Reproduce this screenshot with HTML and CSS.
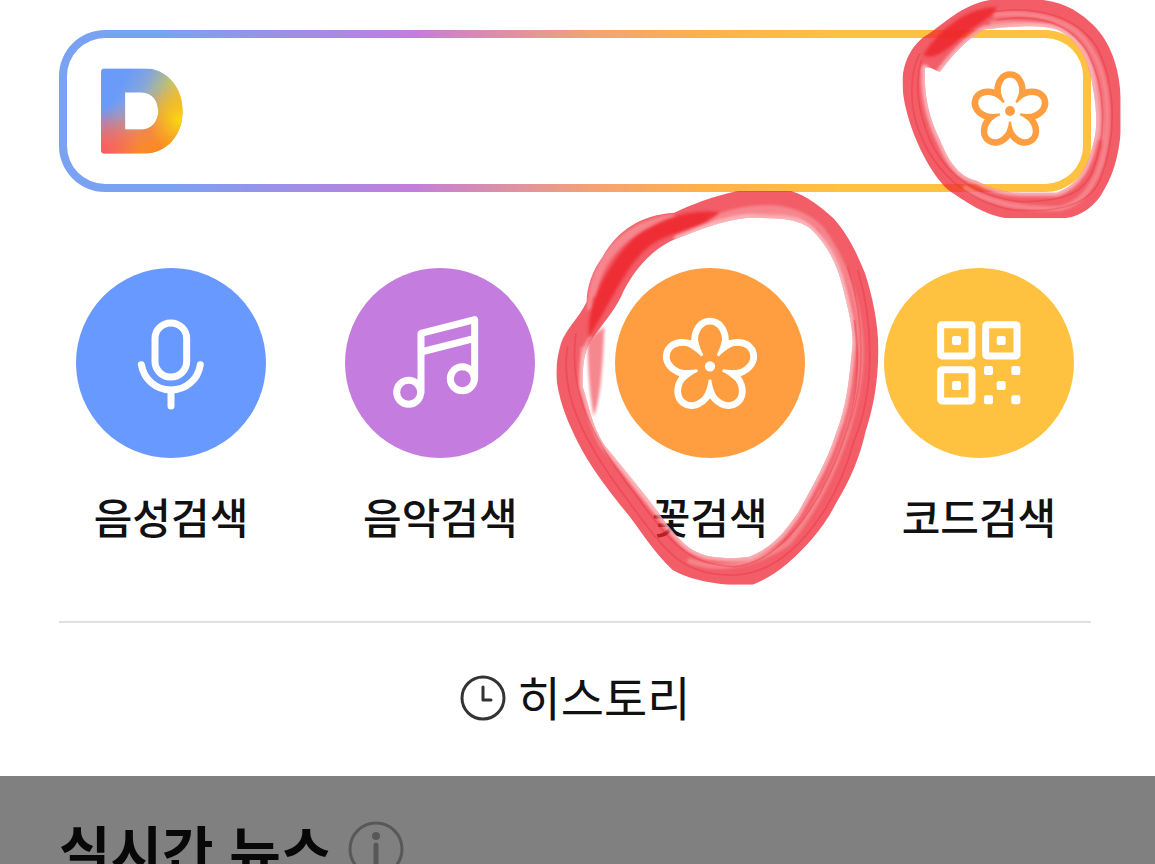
FILE: index.html
```html
<!DOCTYPE html>
<html lang="ko">
<head>
<meta charset="utf-8">
<meta name="viewport" content="width=device-width, initial-scale=1">
<title>검색</title>
<link rel="stylesheet" href="styles.css">
</head>
<body>
<svg class="defs" aria-hidden="true">
  <defs>
    <g id="petal">
      <path d="M-48,-78 C-48,-114 -28,-140 0,-140 C28,-140 48,-114 48,-78"/>
      <path class="wedge" transform="rotate(36)" d="M-2,-43 C-3,-60 -8,-72 -17,-92 L17,-92 C8,-72 3,-60 2,-43Z"/>
    </g>
    <g id="flower">
      <use href="#petal"/>
      <use href="#petal" transform="rotate(72)"/>
      <use href="#petal" transform="rotate(144)"/>
      <use href="#petal" transform="rotate(216)"/>
      <use href="#petal" transform="rotate(288)"/>
    </g>
    <linearGradient id="d-base" x1="0.1" y1="0.15" x2="0.95" y2="0.62">
      <stop offset="0.15" stop-color="#6b9bf8"/>
      <stop offset="0.4" stop-color="#84a5dc"/>
      <stop offset="0.9" stop-color="#f5d815"/>
    </linearGradient>
    <linearGradient id="d-warm" x1="0.35" y1="1" x2="0.15" y2="0.4">
      <stop offset="0" stop-color="#fa8a28"/>
      <stop offset="0.3" stop-color="#f58048" stop-opacity="0.9"/>
      <stop offset="1" stop-color="#d88090" stop-opacity="0"/>
    </linearGradient>
    <radialGradient id="d-red" cx="0" cy="1" r="0.5">
      <stop offset="0" stop-color="#fa5a66"/>
      <stop offset="1" stop-color="#fa5a66" stop-opacity="0"/>
    </radialGradient>
    <radialGradient id="d-yellow" cx="0.96" cy="0.6" r="0.4">
      <stop offset="0" stop-color="#f7dc10"/>
      <stop offset="1" stop-color="#f7c810" stop-opacity="0"/>
    </radialGradient>
    <clipPath id="d-shape">
      <path clip-rule="evenodd" d="M12,0 H130 C200,0 247,58 247,129 C247,200 200,258 130,258 H12 Q0,258 0,246 V12 Q0,0 12,0Z M73,73 V185 H122 C154,185 173,159 173,129 C173,99 154,73 122,73Z"/>
    </clipPath>
    <filter id="soft" x="-20%" y="-20%" width="140%" height="140%"><feGaussianBlur stdDeviation="5"/></filter>
  </defs>
</svg>

<div class="page">
  <main class="panel">
    <form class="search">
      <svg class="logo" viewBox="0 0 248 258" role="img" aria-label="Daum">
        <g clip-path="url(#d-shape)">
          <rect width="248" height="258" fill="url(#d-base)"/>
          <rect width="248" height="258" fill="url(#d-warm)"/>
          <rect width="248" height="258" fill="url(#d-red)"/>
          <rect width="248" height="258" fill="url(#d-yellow)"/>
        </g>
      </svg>
      <input class="query" type="text" aria-label="검색어">
      <button class="flower-button" type="button" aria-label="꽃검색">
        <svg class="flower-icon" viewBox="-150 -150 300 300">
          <use href="#flower"/><circle class="dot" r="19"/>
        </svg>
      </button>
      <svg class="mark mark-small" viewBox="0 0 780 690" aria-hidden="true">
        <clipPath id="ring-a">
          <path clip-rule="evenodd" d="M68,250 C66,190 95,140 130,112 C190,75 240,15 330,0 H490 C560,8 605,42 640,75 C690,125 718,200 722,290 V400 C715,470 700,530 660,590 C630,630 590,655 540,655 H380 C310,645 250,600 205,570 C150,520 110,430 90,370 C75,320 68,290 68,250Z M135,205 C130,300 155,370 180,420 C200,470 230,530 290,542 C330,565 380,578 420,578 H530 C600,555 625,490 640,430 C655,380 648,320 640,270 C630,190 600,125 540,93 C500,72 400,78 315,88 C270,110 230,150 180,215 C160,210 145,195 135,205Z"/>
        </clipPath>
        <g clip-path="url(#ring-a)">
          <rect class="ink" width="780" height="690"/>
          <path class="edge" filter="url(#soft)" d="M135,205 C130,300 155,370 180,420 C200,470 230,530 290,542 C330,565 380,578 420,578 H530 C600,555 625,490 640,430 C655,380 648,320 640,270 C630,190 600,125 540,93 C500,72 400,78 315,88 C270,110 230,150 180,215"/>
          <g class="streak" filter="url(#soft)">
            <path d="M340,45 C430,35 520,45 590,95 C660,160 690,260 680,400 C670,520 620,610 540,625 C430,630 330,610 250,560"/>
            <path d="M330,70 C450,60 560,80 615,160 C660,240 665,330 660,420"/>
          </g>
          <g class="grain">
            <path d="M340,35 C470,15 590,50 650,140 C705,250 715,400 660,540 C630,610 540,640 400,630 C280,610 170,530 120,400 C85,320 90,210 120,160"/>
            <path d="M350,60 C470,40 570,65 625,160 C675,260 685,400 635,520 C610,570 570,605 420,605 C290,590 200,530 150,420 C110,330 105,240 125,180"/>
          </g>
          <path class="dense" filter="url(#soft)" d="M130,165 C190,70 280,20 350,22 C340,55 280,75 230,125 C190,155 160,180 130,165Z"/>
        </g>
      </svg>
    </form>

    <nav class="tools" aria-label="검색 도구">
      <button class="tool" type="button">
        <svg class="disc disc-blue" viewBox="0 0 570 570">
          <rect x="237" y="165" width="95" height="162" rx="47"/>
          <path d="M196,290 C204,335 240,366 285,366 S366,335 373,290 M285,366 V414"/>
        </svg>
        <span class="label">음성검색</span>
      </button>
      <button class="tool" type="button">
        <svg class="disc disc-purple" viewBox="0 0 570 570">
          <circle cx="191" cy="373" r="36"/>
          <circle cx="352" cy="332" r="36"/>
          <path d="M228,373 V196 L389,155 V332 M228,252 L389,211"/>
        </svg>
        <span class="label">음악검색</span>
      </button>
      <div class="tool-wrap">
        <button class="tool" type="button">
          <svg class="disc disc-orange" viewBox="0 0 570 570">
            <g transform="translate(285 295) scale(0.97)"><use href="#flower"/><circle class="dot" r="16"/></g>
          </svg>
          <span class="label">꽃검색</span>
        </button>
        <svg class="mark mark-large" viewBox="0 0 1050 1260" aria-hidden="true">
          <clipPath id="ring-b">
            <path clip-rule="evenodd" d="M590,33 H750 C795,45 845,85 880,118 C922,165 950,225 972,280 C995,350 1014,440 1012,520 C1010,610 998,680 975,750 C957,830 928,900 885,970 C850,1040 800,1098 740,1150 C705,1180 670,1200 635,1214 H560 C490,1207 440,1195 395,1170 C330,1110 290,1035 240,978 C190,915 145,855 112,790 C80,725 60,680 48,610 C43,570 48,530 60,490 C75,445 110,420 137,365 C137,320 155,270 185,230 C230,150 300,105 400,98 C450,75 510,50 590,33Z M620,113 C550,120 470,150 410,175 C340,200 275,270 240,350 C215,400 185,430 150,482 C125,520 125,570 125,620 C145,680 150,730 190,795 C250,870 320,950 375,1030 C410,1070 435,1112 500,1128 C550,1137 590,1135 625,1130 C700,1100 735,1050 770,1000 C820,910 860,840 885,760 C920,670 925,590 935,490 C935,430 918,375 905,320 C885,240 850,185 810,147 C765,110 700,115 620,113Z"/>
          </clipPath>
          <g clip-path="url(#ring-b)">
            <rect class="ink" width="1050" height="1260"/>
            <path class="edge" filter="url(#soft)" d="M410,175 C470,150 550,120 620,113 C700,115 765,110 810,147 C850,185 885,240 905,320 C918,375 935,430 935,490 C925,590 920,670 885,760 C860,840 820,910 770,1000 C735,1050 700,1100 625,1130 C590,1135 550,1137 500,1128 C435,1112 410,1070 375,1030 C320,950 250,870 190,795 C150,730 145,680 125,620 C125,570 125,520 150,482"/>
            <g class="streak" filter="url(#soft)">
              <path d="M450,155 C570,95 690,85 770,115 C860,180 910,290 930,430"/>
              <path d="M500,120 C650,65 760,70 840,145 C915,250 960,370 960,530 C950,740 850,960 740,1090 C650,1150 540,1180 440,1140"/>
              <path d="M125,500 C130,690 220,850 350,1000"/>
              <path d="M145,390 C150,240 240,130 400,110"/>
              <path d="M160,350 C170,250 240,160 370,120"/>
            </g>
            <g class="grain">
              <path d="M80,500 C55,640 130,790 260,960 C370,1110 420,1190 580,1185 C740,1180 880,1000 940,780 C1000,640 1000,430 950,270"/>
              <path d="M105,460 C80,630 150,770 280,940 C390,1090 440,1155 580,1160 C720,1150 850,960 910,770 C975,620 975,430 920,260"/>
              <path d="M940,420 C965,590 940,750 840,930"/>
            </g>
            <path class="dense" filter="url(#soft)" d="M145,470 C130,370 220,220 290,165 C360,115 450,85 535,97 C490,145 400,150 330,195 C260,245 220,350 145,470Z"/>
          </g>
          <path class="tail" filter="url(#soft)" d="M140,480 L190,440 C185,550 180,650 158,710 C145,640 140,560 140,480Z"/>
        </svg>
      </div>
      <button class="tool" type="button">
        <svg class="disc disc-yellow" viewBox="0 0 570 570">
          <rect x="170" y="170" width="94" height="94" rx="4"/>
          <rect x="305" y="170" width="94" height="94" rx="4"/>
          <rect x="170" y="305" width="94" height="94" rx="4"/>
          <g class="dot">
            <rect x="204" y="204" width="27" height="27" rx="6"/>
            <rect x="338" y="204" width="27" height="27" rx="6"/>
            <rect x="204" y="339" width="27" height="27" rx="6"/>
            <rect x="300" y="294" width="27" height="27" rx="6"/>
            <rect x="382" y="294" width="27" height="27" rx="6"/>
            <rect x="338" y="339" width="27" height="27" rx="6"/>
            <rect x="300" y="382" width="27" height="27" rx="6"/>
            <rect x="382" y="382" width="27" height="27" rx="6"/>
          </g>
        </svg>
        <span class="label">코드검색</span>
      </button>
    </nav>

    <div class="history-row">
      <button class="history" type="button">
        <svg class="clock" viewBox="0 0 46 46"><circle cx="23" cy="23" r="21"/><path d="M23,12 V25 H31"/></svg>
        <span>히스토리</span>
      </button>
    </div>
  </main>

  <section class="news">
    <h2 class="news-title">실시간 뉴스</h2>
    <button class="info" type="button" aria-label="안내">
      <svg class="info-icon" viewBox="0 0 56 56"><circle class="info-ring" cx="28" cy="28" r="26"/><circle class="info-dot" cx="28" cy="15" r="4"/><path d="M28,24 V43"/></svg>
    </button>
  </section>
</div>
</body>
</html>
```
FILE: styles.css
```css
* {
  box-sizing: border-box;
}

body {
  margin: 0;
  background: #fff;
  color: #111;
  font-family: "Noto Sans CJK KR", sans-serif;
}

button {
  margin: 0;
  padding: 0;
  border: 0;
  background: none;
  color: inherit;
  font: inherit;
}

svg {
  display: block;
}

.defs {
  position: absolute;
  width: 0;
  height: 0;
}

.page {
  display: flex;
  flex-direction: column;
  height: 100vh;
  overflow: hidden;
}

.panel {
  flex: none;
  padding: 30px 64px 0 59px;
}

.search {
  position: relative;
  display: flex;
  align-items: center;
  padding: 30px 34px;
  border: 8px solid transparent;
  border-radius: 46px;
  background:
    linear-gradient(#fff, #fff) padding-box,
    linear-gradient(90deg, #79a2f3 0%, #79a2f3 10%, #c17edb 34%, #f5a273 52%, #ffb04a 62%, #ffc240 76%) border-box;
}

.logo {
  flex: none;
  width: 82px;
  height: 86px;
}

.query {
  flex: 1;
  min-width: 0;
  height: 60px;
  margin: 0 24px;
  padding: 0;
  border: 0;
  outline: 0;
  background: transparent;
  font: inherit;
  font-size: 43px;
}

.flower-icon {
  width: 78px;
  height: 78px;
  overflow: visible;
  color: #ff9e40;
  fill: none;
  stroke: #ff9e40;
  stroke-width: 25;
  stroke-linecap: round;
  stroke-linejoin: round;
}

.flower-icon .dot {
  fill: #ff9e40;
  stroke: none;
}

.wedge {
  fill: currentColor;
  stroke-width: 5;
}

.tools {
  display: flex;
  justify-content: space-between;
  padding: 76px 17px 0;
}

.tool-wrap {
  position: relative;
}

.tool {
  display: flex;
  flex-direction: column;
  align-items: center;
  gap: 33px;
}

.disc {
  width: 190px;
  height: 190px;
  border-radius: 50%;
  color: #fff;
  fill: none;
  stroke: #fff;
  stroke-width: 21;
  stroke-linecap: round;
  stroke-linejoin: round;
}

.disc .dot {
  fill: #fff;
  stroke: none;
}

.disc-blue {
  background: #6899ff;
}

.disc-purple {
  background: #c47cdf;
}

.disc-orange {
  background: #ff9e40;
}

.disc-yellow {
  background: #ffc240;
}

.label {
  font-size: 42px;
  font-weight: 500;
  line-height: 50px;
  white-space: nowrap;
}

.history-row {
  display: flex;
  justify-content: center;
  margin-top: 80px;
  padding: 40px 0 43px;
  border-top: 2px solid #e0e0e0;
}

.history {
  display: flex;
  align-items: center;
  gap: 12px;
  font-size: 47px;
  line-height: 70px;
}

.history span {
  margin-top: -4px;
  line-height: 74px;
}

.clock {
  width: 46px;
  height: 46px;
  fill: none;
  stroke: #333;
  stroke-width: 3;
  stroke-linecap: round;
  stroke-linejoin: round;
}

.news {
  display: flex;
  flex: 1 0 auto;
  align-items: flex-start;
  gap: 16px;
  padding: 33px 59px;
  background: #808080;
  color: #080808;
}

.news-title {
  margin: 0;
  font-size: 56px;
  font-weight: 700;
  line-height: 80px;
}

.info {
  padding: 12px 0;
}

.info-icon {
  width: 56px;
  height: 56px;
  fill: none;
  stroke: #585858;
  stroke-width: 5;
  stroke-linecap: round;
}

.info-ring {
  stroke-width: 3;
}

.info-dot {
  fill: #585858;
  stroke: none;
}

.mark {
  position: absolute;
  pointer-events: none;
}

.mark-small {
  top: -38px;
  right: -57px;
  width: 260px;
  height: 230px;
}

.mark-large {
  top: -88px;
  left: -74px;
  width: 350px;
  height: 420px;
}

.ink {
  fill: #ee2532;
  opacity: 0.74;
}

.edge {
  fill: none;
  stroke: #fff;
  stroke-width: 22;
  stroke-linecap: round;
  opacity: 0.5;
}

.streak {
  fill: none;
  stroke: #ffc4c8;
  stroke-width: 16;
  opacity: 0.4;
}

.grain {
  fill: none;
  stroke: #e82431;
  stroke-width: 5;
  opacity: 0.3;
}

.dense {
  fill: #ee2229;
  opacity: 0.8;
}

.tail {
  fill: #f2555f;
  opacity: 0.7;
}
```
